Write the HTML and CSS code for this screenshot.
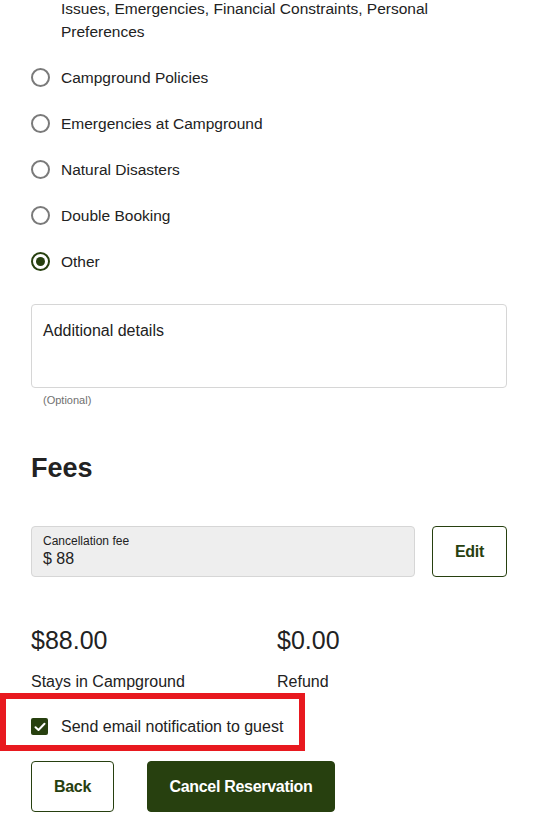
FILE: index.html
```html
<!DOCTYPE html>
<html>
<head>
<meta charset="utf-8">
<link rel="stylesheet" href="styles.css">
</head>
<body>
<div class="page">
  <div class="reasons">
    <div class="cont">Issues, Emergencies, Financial Constraints, Personal Preferences</div>
    <label class="radio"><span class="circle"></span><span>Campground Policies</span></label>
    <label class="radio"><span class="circle"></span><span>Emergencies at Campground</span></label>
    <label class="radio"><span class="circle"></span><span>Natural Disasters</span></label>
    <label class="radio"><span class="circle"></span><span>Double Booking</span></label>
    <label class="radio"><span class="circle checked"></span><span>Other</span></label>
  </div>

  <div class="textarea">Additional details</div>
  <div class="hint">(Optional)</div>

  <h2 class="title">Fees</h2>

  <div class="fee-row">
    <div class="fee-field">
      <div class="fee-label">Cancellation fee</div>
      <div class="fee-value">$ 88</div>
    </div>
    <button class="btn outline edit">Edit</button>
  </div>

  <div class="totals">
    <div class="total">
      <div class="amount">$88.00</div>
      <div class="caption">Stays in Campground</div>
    </div>
    <div class="total">
      <div class="amount">$0.00</div>
      <div class="caption">Refund</div>
    </div>
  </div>

  <div class="notify-wrap">
    <label class="check">
      <span class="box"><svg width="12" height="10" viewBox="0 0 12 10"><path d="M1.5 5.2 L4.5 8 L10.5 1.8" fill="none" stroke="#fff" stroke-width="2" stroke-linecap="round" stroke-linejoin="round"/></svg></span>
      <span>Send email notification to guest</span>
    </label>
  </div>

  <div class="actions">
    <button class="btn outline back">Back</button>
    <button class="btn solid">Cancel Reservation</button>
  </div>
</div>
</body>
</html>
```
FILE: styles.css
```css
html, body {
  margin: 0;
  padding: 0;
  background: #fff;
}
body {
  font-family: "Liberation Sans", Arial, sans-serif;
  color: #222;
  font-size: 16px;
}
.page {
  width: 476px;
  padding-left: 31px;
}
.reasons {
  margin-top: -3px;
  display: flex;
  flex-direction: column;
  gap: 23px;
  font-size: 15.5px;
}
.cont {
  padding-left: 30px;
  line-height: 23px;
  width: 380px;
}
.radio {
  display: flex;
  align-items: center;
  gap: 11px;
  line-height: 23px;
}
.circle {
  box-sizing: border-box;
  width: 19px;
  height: 19px;
  border-radius: 50%;
  border: 2px solid #7a7a7a;
  display: flex;
  align-items: center;
  justify-content: center;
  flex: none;
}
.circle.checked {
  border-color: #27400f;
}
.circle.checked::after {
  content: "";
  width: 9px;
  height: 9px;
  border-radius: 50%;
  background: #27400f;
}
.textarea {
  margin-top: 31px;
  box-sizing: border-box;
  height: 84px;
  border: 1px solid #d6d6d6;
  border-radius: 4px;
  padding: 16px 11px;
  line-height: 20px;
  color: #222;
}
.hint {
  font-size: 11px;
  color: #707070;
  padding-left: 12px;
  margin-top: 5px;
  line-height: 14px;
}
.title {
  margin: 45px 0 0;
  font-size: 27px;
  font-weight: bold;
  line-height: 32px;
  color: #222;
}
.fee-row {
  margin-top: 42px;
  display: flex;
  gap: 17px;
  height: 51px;
}
.fee-field {
  flex: 1;
  box-sizing: border-box;
  background: #eeeeee;
  border: 1px solid #d6d6d6;
  border-radius: 4px;
  padding: 7px 11px;
}
.fee-label {
  font-size: 12px;
  line-height: 15px;
}
.fee-value {
  font-size: 16px;
  line-height: 20px;
}
.btn {
  font-family: inherit;
  font-size: 16px;
  font-weight: bold;
  border-radius: 4px;
  box-sizing: border-box;
  height: 51px;
  cursor: pointer;
  letter-spacing: -0.3px;
}
.btn.outline {
  background: #fff;
  border: 1px solid #27400f;
  color: #27400f;
}
.edit {
  width: 75px;
  flex: none;
}
.totals {
  margin-top: 48px;
  display: flex;
}
.total {
  width: 246px;
  flex: none;
}
.amount {
  font-size: 25px;
  line-height: 30px;
}
.caption {
  margin-top: 17px;
  line-height: 20px;
}
.notify-wrap {
  margin-left: -31px;
  margin-top: 1px;
  width: 305px;
  height: 58px;
  box-sizing: border-box;
  border: 6px solid #e8191f;
  display: flex;
  align-items: center;
  padding-left: 25px;
  padding-top: 9px;
}
.check {
  display: flex;
  align-items: center;
  gap: 13px;
  line-height: 20px;
}
.box {
  width: 17px;
  height: 17px;
  border-radius: 2px;
  background: #27400f;
  display: flex;
  align-items: center;
  justify-content: center;
  flex: none;
}
.actions {
  margin-top: 10px;
  display: flex;
  gap: 33px;
}
.back {
  width: 83px;
}
.btn.solid {
  width: 188px;
  background: #27400f;
  border: 1px solid #27400f;
  color: #fff;
}
```
